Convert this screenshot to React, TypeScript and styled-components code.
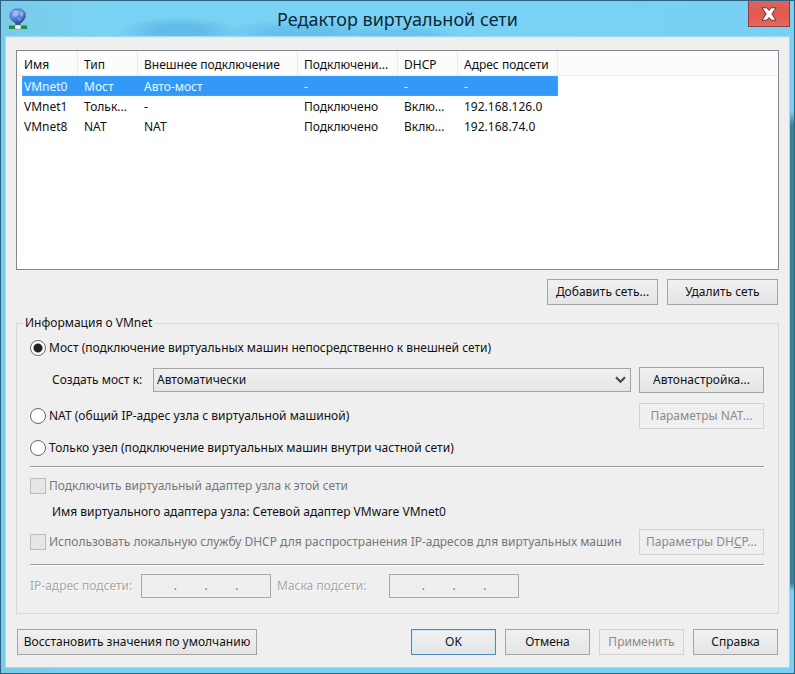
import React, { useState } from 'react';
import styled, { createGlobalStyle, css } from 'styled-components';

const GlobalStyle = createGlobalStyle`
  *, *::before, *::after { box-sizing: border-box; }
  body { margin: 0; }
  body, button, input, select {
    font-family: "Noto Sans", "Open Sans", sans-serif;
    font-size: 12px;
    line-height: 16px;
    color: #111;
  }
`;

const Frame = styled.div`
  display: flex;
  flex-direction: column;
  min-height: 100vh;
  padding: 0 5px 6px;
  border: 1px solid #2d6180;
  background:
    linear-gradient(180deg, #73ccee00 110px, #3d8196 124px, #3d8196 582px, #73ccee00 590px) right / 5px 100% no-repeat,
    radial-gradient(ellipse 62px 14px at 178px 30px, #55b3e2aa 40%, #55b3e200),
    radial-gradient(ellipse 80px 14px at 300px 32px, #55b3e288 40%, #55b3e200),
    radial-gradient(ellipse 60px 10px at 400px 34px, #55b3e277 40%, #55b3e200),
    linear-gradient(90deg, #79cbe8 0, #7ad2f3 90px, #78d1f3 100%);
`;

const TitleBar = styled.header`
  display: grid;
  grid-template-columns: 1fr auto 1fr;
  height: 36px;
`;

const AppIcon = styled.svg`
  margin: 7px 0 0 2px;
`;

const Title = styled.h1`
  margin: 0;
  font-size: 18px;
  font-weight: 400;
  line-height: 36px;
  color: #0d2836;
`;

const CloseButton = styled.button`
  display: grid;
  place-items: center;
  justify-self: end;
  width: 42px;
  height: 26px;
  margin-right: -1px;
  padding: 0;
  border: 1px solid #8f3c44;
  border-top: 0;
  background: linear-gradient(#d9655f, #e2584e 50%, #e4685c);
`;

const Client = styled.main`
  flex: 1;
  display: flex;
  flex-direction: column;
  padding: 12px 10px;
  border-top: 1px solid #dcecf2;
  background: #efefef;
  box-shadow: 0 0 0 1px #9adcf3;
`;

const ListBox = styled.div`
  flex: 1;
  min-height: 220px;
  border: 1px solid #828790;
  background: linear-gradient(#fcfcfc 24px, #ececec 24px, #ececec 25px, #fff 25px);
`;

const NetworkTable = styled.table`
  width: 536px;
  margin-left: 5px;
  table-layout: fixed;
  border-collapse: separate;
  border-spacing: 0;
`;

const Column = styled.col<{ $width: number }>`
  width: ${(p) => p.$width}px;
`;

const cell = css`
  padding: 2px 0 0 6px;
  text-align: left;
  font-weight: 400;
  white-space: nowrap;
  &:first-child { padding-left: 2px; }
`;

const HeadCell = styled.th`
  ${cell}
  height: 25px;
  border-right: 1px solid #ececec;
`;

const Row = styled.tr<{ $selected: boolean }>`
  ${(p) => p.$selected && css`
    background: #3399f8;
    color: #e8fbff;
    outline: 1px dotted #c98a4a;
    outline-offset: -1px;
  `}
`;

const Cell = styled.td`
  ${cell}
  height: 20px;
`;

const ButtonRow = styled.div`
  display: flex;
  flex-wrap: wrap;
  gap: 9px;
  padding: 0 1px;
`;

const ListActions = styled(ButtonRow)`
  justify-content: flex-end;
  margin-top: 9px;
`;

const DialogActions = styled(ButtonRow)`
  margin-top: 15px;
`;

const Spacer = styled.span`
  flex: 1;
`;

const Button = styled.button<{ $width: number; $primary?: boolean }>`
  width: ${(p) => p.$width}px;
  height: 26px;
  padding: 0;
  white-space: nowrap;
  border: 1px solid ${(p) => (p.$primary ? '#4a8cc0' : '#a3a5a5')};
  background: linear-gradient(#f1f1f1, #e4e4e4);
  box-shadow: ${(p) => (p.$primary ? 'inset 0 0 0 1px #cfeaf5' : 'none')};
  &:disabled {
    color: #8b8b8b;
    border-color: #d2d2d2;
    background: #efefef;
  }
`;

const Group = styled.fieldset`
  min-width: 0;
  margin: 9px 0 0;
  padding: 3px 14px 15px 13px;
  border: 1px solid #d9d9d9;
`;

const Legend = styled.legend`
  margin-left: -7px;
  padding: 0 2px;
  line-height: 18px;
`;

const Line = styled.div<{ $gap: number; $indent?: boolean }>`
  display: flex;
  align-items: center;
  gap: 8px;
  min-height: 26px;
  margin-top: ${(p) => p.$gap}px;
  padding-left: ${(p) => (p.$indent ? 22 : 0)}px;
`;

const FieldLabel = styled.label`
  width: 93px;
  white-space: nowrap;
`;

const Choice = styled.label<{ $muted?: boolean }>`
  flex: 1;
  display: flex;
  align-items: center;
  gap: 3px;
  white-space: nowrap;
  color: ${(p) => (p.$muted ? '#777' : 'inherit')};
`;

const Radio = styled.input.attrs({ type: 'radio', name: 'mode' })`
  appearance: none;
  width: 16px;
  height: 16px;
  margin: 0;
  border: 1px solid #686868;
  border-radius: 50%;
  background: #fff;
  &:checked {
    background: radial-gradient(circle, #222 0 4px, #fff 5px);
  }
`;

const Check = styled.input.attrs({ type: 'checkbox' })`
  appearance: none;
  width: 16px;
  height: 16px;
  margin: 0;
  border: 1px solid #bcbcbc;
  background: #e6e6e6;
`;

const BridgeSelect = styled.select`
  flex: 1;
  min-width: 0;
  height: 24px;
  padding: 0 22px 0 3px;
  appearance: none;
  border: 1px solid #a3a5a5;
  border-radius: 0;
  background:
    url("data:image/svg+xml,%3Csvg xmlns='http://www.w3.org/2000/svg' width='11' height='8'%3E%3Cpath d='M1 1.2l4.5 4.6L10 1.2' fill='none' stroke='%23444' stroke-width='2'/%3E%3C/svg%3E") right 4px center no-repeat,
    linear-gradient(#f0f0f0, #e5e5e5);
`;

const Rule = styled.hr<{ $gap: number }>`
  height: 2px;
  margin: ${(p) => p.$gap}px 0 0;
  border: 0;
  border-top: 1px solid #9c9c9c;
  border-bottom: 1px solid #fff;
`;

const AddressLine = styled.div`
  display: flex;
  align-items: center;
  gap: 6px;
  margin-top: 8px;
`;

const AddressLabel = styled.span<{ $width: number }>`
  width: ${(p) => p.$width}px;
  white-space: nowrap;
  color: #a6a6a6;
  text-shadow: 1px 1px #fff;
`;

const AddressField = styled.div`
  display: flex;
  align-items: center;
  width: 130px;
  height: 24px;
  padding: 0 4px;
  border: 1px solid #a9a9a9;
  color: #777;
`;

const Octet = styled.input`
  flex: 1;
  min-width: 0;
  padding: 0;
  border: 0;
  background: transparent;
  text-align: center;
`;

const Dot = styled.span`
  width: 3px;
`;

const columns = [
  { title: 'Имя', width: 56 },
  { title: 'Тип', width: 60 },
  { title: 'Внешнее подключение', width: 160 },
  { title: 'Подключени...', width: 100 },
  { title: 'DHCP', width: 60 },
  { title: 'Адрес подсети', width: 100 },
];

const networks = [
  ['VMnet0', 'Мост', 'Авто-мост', '-', '-', '-'],
  ['VMnet1', 'Тольк...', '-', 'Подключено', 'Вклю...', '192.168.126.0'],
  ['VMnet8', 'NAT', 'NAT', 'Подключено', 'Вклю...', '192.168.74.0'],
];

function Address({ label, width }: { label: string; width: number }) {
  return (
    <>
      <AddressLabel $width={width}>{label}</AddressLabel>
      <AddressField role="group" aria-label={label}>
        {[1, 2, 3, 4].map((n) => (
          <React.Fragment key={n}>
            {n > 1 && <Dot>.</Dot>}
            <Octet disabled aria-label={`${label} ${n}`} />
          </React.Fragment>
        ))}
      </AddressField>
    </>
  );
}

export default function App() {
  const [mode, setMode] = useState('bridge');
  const [selected, setSelected] = useState('VMnet0');

  return (
    <Frame>
      <GlobalStyle />
      <TitleBar>
        <AppIcon width="20" height="22" viewBox="0 0 20 22" aria-hidden="true">
          <defs>
            <linearGradient id="globe" x1="0.2" y1="0" x2="0.7" y2="1">
              <stop offset="0" stopColor="#8fb4f0" />
              <stop offset="0.5" stopColor="#5b87d8" />
              <stop offset="1" stopColor="#25409c" />
            </linearGradient>
          </defs>
          <path d="M7.500 14h5v4h-5z" fill="#3c4668" />
          <path
            d="M6 1.200h7L17 4.500 17.400 9 15 13l-3 2.500H8L4.500 13 2 9.500 2.500 5z"
            fill="url(#globe)"
            stroke="#3a5899"
            strokeWidth="0.800"
          />
          <path d="M6 3h4l1 3-3 3-3-1zM12 3l3 2v3l-2 1-1-3z" fill="#b4cffa" opacity="0.600" />
          <path d="M9 10l3-1 2 2-3 3z" fill="#8aa9e8" opacity="0.600" />
          <path d="M1 17.500h18V21H1z" fill="#14903a" />
          <path d="M7 17h6v4H7z" fill="#f2f6f4" stroke="#6d8a80" strokeWidth="0.500" />
        </AppIcon>
        <Title>Редактор виртуальной сети</Title>
        <CloseButton aria-label="Закрыть">
          <svg width="16" height="14" viewBox="0 0 16 14" aria-hidden="true">
            <path
              d="M1 .8h5L8 3.400 10 .8h5L10.800 7l4.200 6.200h-5L8 10.600 6 13.200H1L5.200 7z"
              fill="#fff"
              stroke="#6b3038"
              strokeWidth="1"
            />
          </svg>
        </CloseButton>
      </TitleBar>
      <Client>
        <ListBox>
          <NetworkTable>
            <colgroup>
              {columns.map((c) => <Column key={c.title} $width={c.width} />)}
            </colgroup>
            <thead>
              <tr>{columns.map((c) => <HeadCell key={c.title} scope="col">{c.title}</HeadCell>)}</tr>
            </thead>
            <tbody>
              {networks.map((net) => (
                <Row key={net[0]} $selected={net[0] === selected} onClick={() => setSelected(net[0])}>
                  {net.map((value, i) => <Cell key={i}>{value}</Cell>)}
                </Row>
              ))}
            </tbody>
          </NetworkTable>
        </ListBox>
        <ListActions>
          <Button $width={111}>Добавить сеть...</Button>
          <Button $width={111}>Удалить сеть</Button>
        </ListActions>
        <Group>
          <Legend>Информация о VMnet</Legend>
          <Line $gap={0}>
            <Choice>
              <Radio checked={mode === 'bridge'} onChange={() => setMode('bridge')} />
              Мост (подключение виртуальных машин непосредственно к внешней сети)
            </Choice>
          </Line>
          <Line $gap={6} $indent>
            <FieldLabel htmlFor="bridge">Создать мост к:</FieldLabel>
            <BridgeSelect id="bridge"><option>Автоматически</option></BridgeSelect>
            <Button $width={125}>Автонастройка...</Button>
          </Line>
          <Line $gap={10}>
            <Choice>
              <Radio checked={mode === 'nat'} onChange={() => setMode('nat')} />
              NAT (общий IP-адрес узла с виртуальной машиной)
            </Choice>
            <Button $width={125} disabled>Параметры NAT...</Button>
          </Line>
          <Line $gap={6}>
            <Choice>
              <Radio checked={mode === 'host'} onChange={() => setMode('host')} />
              Только узел (подключение виртуальных машин внутри частной сети)
            </Choice>
          </Line>
          <Rule $gap={5} />
          <Line $gap={5}>
            <Choice $muted><Check disabled />Подключить виртуальный адаптер узла к этой сети</Choice>
          </Line>
          <Line $gap={0} $indent>Имя виртуального адаптера узла: Сетевой адаптер VMware VMnet0</Line>
          <Line $gap={4}>
            <Choice $muted>
              <Check disabled />
              Использовать локальную службу DHCP для распространения IP-адресов для виртуальных машин
            </Choice>
            <Button $width={125} disabled>Параметры DH<u>C</u>P...</Button>
          </Line>
          <Rule $gap={9} />
          <AddressLine>
            <Address label="IP-адрес подсети:" width={105} />
            <Address label="Маска подсети:" width={106} />
          </AddressLine>
        </Group>
        <DialogActions>
          <Button $width={240}>Восстановить значения по умолчанию</Button>
          <Spacer />
          <Button $width={85} $primary>OK</Button>
          <Button $width={85}>Отмена</Button>
          <Button $width={85} disabled>Применить</Button>
          <Button $width={85}>Справка</Button>
        </DialogActions>
      </Client>
    </Frame>
  );
}
